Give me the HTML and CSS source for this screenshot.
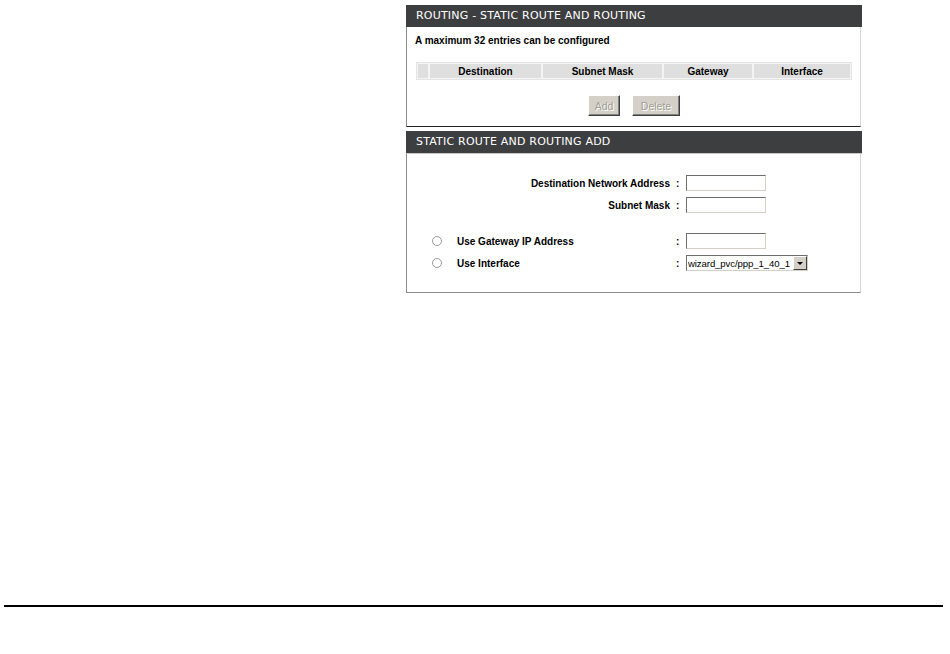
FILE: index.html
```html
<!DOCTYPE html>
<html lang="en">

<head>
  <meta charset="UTF-8">
  <title>Static Route</title>
  <link rel="stylesheet" href="styles.css">
</head>

<body>
  <div class="layout">
    <div class="sidenav"></div>
    <div class="content">
      <div class="box box-top">
        <h2 class="box-title">ROUTING - STATIC ROUTE AND ROUTING</h2>
        <div class="box-body">
          <p class="note">A maximum 32 entries can be configured</p>
          <table class="route-table">
            <tr>
              <th class="col-sel"></th>
              <th class="col-dest">Destination</th>
              <th class="col-mask">Subnet Mask</th>
              <th class="col-gw">Gateway</th>
              <th class="col-if">Interface</th>
            </tr>
          </table>
          <div class="button-row">
            <button class="btn btn-add" disabled>Add</button>
            <button class="btn btn-del" disabled>Delete</button>
          </div>
        </div>
      </div>

      <div class="box box-add">
        <h2 class="box-title title-shadow">STATIC ROUTE AND ROUTING ADD</h2>
        <div class="box-body form-body">
          <div class="form-grid">
            <label class="lbl lbl-right">Destination Network Address</label>
            <span class="colon">:</span>
            <input type="text" class="field">

            <label class="lbl lbl-right">Subnet Mask</label>
            <span class="colon">:</span>
            <input type="text" class="field">
          </div>

          <div class="form-grid via-grid">
            <input type="radio" name="via" class="radio">
            <label class="lbl">Use Gateway IP Address</label>
            <span class="colon">:</span>
            <input type="text" class="field">

            <input type="radio" name="via" class="radio">
            <label class="lbl">Use Interface</label>
            <span class="colon">:</span>
            <div class="select-wrap">
              <select class="select">
                <option>wizard_pvc/ppp_1_40_1</option>
              </select>
            </div>
          </div>
        </div>
      </div>
    </div>
  </div>
  <div class="footer-rule"></div>
</body>

</html>
```

FILE: styles.css
```css
body {
  margin: 0;
  background-color: #fff;
  font-family: "Liberation Sans", Arial, sans-serif;
  font-size: 10px;
  color: #000;
}

.layout {
  display: flex;
  padding-top: 5px;
}

.sidenav {
  width: 406px;
  flex-shrink: 0;
}

.content {
  width: 455px;
  display: flex;
  flex-direction: column;
  gap: 4px;
}

.box {
  border-left: 1px solid #8c8c8c;
  border-right: 1px solid #d6d6d6;
  background-color: #fff;
}

.box-top {
  border-bottom: 1px solid #222;
}

.box-add {
  border-bottom: 1px solid #8c8c8c;
}

.box-title {
  margin: 0 0 0 -1px;
  width: 456px;
  height: 22px;
  line-height: 22px;
  padding-left: 10px;
  box-sizing: border-box;
  background-color: #3d3e3f;
  color: #fff;
  font-family: "DejaVu Sans", sans-serif;
  font-size: 11px;
  font-weight: normal;
  letter-spacing: 0.2px;
}

.title-shadow {
  border-bottom: 1px solid #c8c8c8;
  height: 23px;
}

.box-body {
  padding: 8px 9px 10px 8px;
}

.note {
  margin: 0 0 16px 0;
  font-weight: bold;
}

.route-table {
  width: 436px;
  height: 18px;
  margin-left: 1px;
  border-collapse: separate;
  border-spacing: 0;
  border: 1px solid #e4e4e4;
  background-color: #fff;
}

.route-table th {
  background-color: #dfdfdf;
  border: 1px solid #f4f4f4;
  font-weight: bold;
  padding: 0;
  height: 14px;
  text-align: center;
}

.col-sel {
  width: 10px;
}

.col-dest {
  width: 111px;
}

.col-mask {
  width: 119px;
}

.col-gw {
  width: 88px;
}

.button-row {
  display: flex;
  justify-content: center;
  gap: 12px;
  margin-top: 15px;
  padding-left: 2px;
}

.btn {
  height: 21px;
  padding: 0;
  background-color: #d4d0c8;
  border: 1px solid;
  border-color: #fff #404040 #404040 #fff;
  box-shadow: inset -1px -1px 0 #808080;
  font-family: "Liberation Sans", Arial, sans-serif;
  font-size: 10.5px;
  color: #a19e96;
  text-shadow: 1px 1px 0 #fff;
}

.btn-add {
  width: 32px;
}

.btn-del {
  width: 48px;
}

.form-body {
  padding: 21px 0 21px 24px;
}

.form-grid {
  display: grid;
  grid-template-columns: 26px 219px 10px 80px;
  grid-auto-rows: 16px;
  row-gap: 6px;
  align-items: center;
}

.via-grid {
  margin-top: 20px;
}

.lbl {
  font-weight: bold;
}

.lbl-right {
  grid-column: 1 / 3;
  text-align: right;
  padding-right: 6px;
}

.colon {
  font-weight: bold;
}

.field {
  width: 80px;
  height: 16px;
  box-sizing: border-box;
  margin: 0;
  border: 1px solid;
  border-color: #6d6d6d #d4d0c8 #d4d0c8 #6d6d6d;
  background-color: #fff;
  font-size: 11px;
}

.radio {
  appearance: none;
  width: 10px;
  height: 10px;
  margin: 0 0 0 1px;
  border: 1px solid #9b9b9b;
  border-radius: 50%;
  background-color: #fff;
  justify-self: start;
}

.select-wrap {
  position: relative;
  width: 122px;
  height: 16px;
}

.select {
  appearance: none;
  width: 122px;
  height: 16px;
  margin: 0;
  padding: 0 0 0 1px;
  box-sizing: border-box;
  border: 1px solid;
  border-color: #6d6d6d #d4d0c8 #d4d0c8 #6d6d6d;
  background-color: #fff;
  font-family: "Liberation Sans", Arial, sans-serif;
  font-size: 9.6px;
  letter-spacing: -0.1px;
  color: #000;
}

.select-wrap::after {
  content: "";
  position: absolute;
  top: 1px;
  right: 1px;
  width: 14px;
  height: 14px;
  box-sizing: border-box;
  background-color: #d4d0c8;
  border: 1px solid;
  border-color: #fff #404040 #404040 #fff;
}

.select-wrap::before {
  content: "";
  position: absolute;
  top: 7px;
  right: 5px;
  border-left: 3px solid transparent;
  border-right: 3px solid transparent;
  border-top: 3px solid #000;
  z-index: 1;
}

.footer-rule {
  height: 2px;
  margin: 312px 7px 0 4px;
  background-color: #000;
}
```
